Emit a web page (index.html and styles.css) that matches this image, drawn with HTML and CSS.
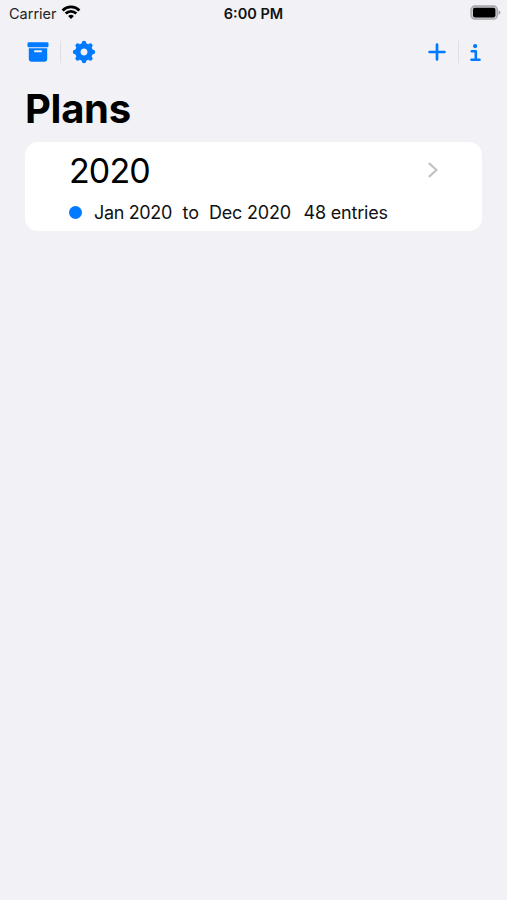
FILE: index.html
```html
<!DOCTYPE html>
<html lang="en">
<head>
<meta charset="utf-8">
<title>Plans</title>
<link rel="stylesheet" href="styles.css">
</head>
<body>
<header class="status">
  <div class="carrier"><span>Carrier</span>
    <svg width="20" height="15" viewBox="0 0 20 15" fill="none" stroke="#000" stroke-width="2.8"><path d="M1.6 5.4a12 12 0 0 1 16.8 0M4.7 8.6a7.6 7.6 0 0 1 10.6 0"/><path d="M10 14l-2.9-2.9a4.2 4.2 0 0 1 5.8 0z" fill="#000" stroke="none"/></svg>
  </div>
  <time class="clock">6:00 PM</time>
  <svg class="battery" width="31" height="16" viewBox="0 0 31 16"><rect x="1" y="1" width="26.4" height="13.2" rx="4" fill="#c9c9cc" stroke="#a5a5a9" stroke-width="1.3"/><rect x="3" y="2.8" width="22.4" height="9.6" rx="1.8"/><path d="M28.5 5.3q2 1 2 2.3t-2 2.3z" fill="#a5a5a9"/></svg>
</header>
<nav class="toolbar">
  <div class="group">
    <svg width="22" height="20" viewBox="0 0 22 20" fill="#007aff"><rect x=".5" y=".3" width="21" height="4.9" rx="1.3"/><path fill-rule="evenodd" d="M1.8 6.3h18.4v10.4q0 3-3 3H4.8q-3 0-3-3zM7.8 8.3q-.8 0-.8 1t.8 1h6.4q.8 0 .8-1t-.8-1z"/></svg>
    <i class="divider"></i>
    <svg class="gear" width="24" height="24" viewBox="-12 -12 24 24"><circle r="6.2" fill="none" stroke="#007aff" stroke-width="5.4"/><path stroke="#007aff" stroke-width="4.6" stroke-linecap="round" d="M0-7.5V-8.9M0 7.5V8.9M-7.5 0H-8.9M7.5 0H8.9M5.3-5.3l1-1M5.3 5.3l1 1M-5.3 5.3l-1 1M-5.3-5.3l-1-1"/></svg>
  </div>
  <div class="group">
    <svg class="plus" width="18" height="18" viewBox="0 0 18 18" fill="none" stroke="#007aff" stroke-width="2.7" stroke-linecap="round"><path d="M9 1.6v14.8M1.6 9h14.8"/></svg>
    <i class="divider"></i>
    <svg class="info" width="11" height="18" viewBox="0 0 11 18" fill="none" stroke="#007aff" stroke-width="2.6" stroke-linecap="round" stroke-linejoin="round"><circle cx="5.1" cy="2.1" r="2.1" fill="#007aff" stroke="none"/><path d="M1.8 7.3h4v8.4M1.5 15.7h8"/></svg>
  </div>
</nav>
<main>
  <h1>Plans</h1>
  <article class="card">
    <div class="heading"><h2>2020</h2>
      <svg class="chevron" width="10" height="16" viewBox="0 0 10 16" fill="none" stroke="#c4c4c7" stroke-width="2.3" stroke-linecap="round" stroke-linejoin="round"><path d="M1.5 1.7L8.5 8l-7 6.3"/></svg>
    </div>
    <div class="meta"><i class="dot"></i><span class="from">Jan 2020</span><span class="to">to</span><span class="until">Dec 2020</span><span>48 entries</span></div>
  </article>
</main>
</body>
</html>
```
FILE: styles.css
```css
* { box-sizing: border-box; }
body { margin: 0; min-height: 900px; background: #f1f1f6; color: #000; font-family: Inter, sans-serif; }
svg { display: block; flex: none; }
.status { height: 27px; padding: 0 6px 0 9px; display: grid; grid-template-columns: 1fr auto 1fr; align-items: center; font-size: 14.5px; }
.carrier { display: flex; align-items: center; gap: 4px; color: #222; }
.carrier span { width: 48px; }
.carrier svg { margin-top: -2px; }
.clock { font-weight: 600; color: #111; margin-right: 3px; }
.battery { justify-self: end; margin-top: -1px; }
.toolbar { height: 50px; padding: 0 26px 0 27px; display: flex; justify-content: space-between; align-items: center; }
.group { display: flex; align-items: center; }
.divider { width: 1px; height: 22px; margin: 0 11px; background: #dfdfe4; }
.gear { margin-left: -.5px; }
.plus { margin-right: 1px; }
.info { margin-top: 1px; }
h1, h2 { margin: 0; }
h1 { height: 65px; padding-left: 25px; font-size: 40px; line-height: 64px; font-weight: 700; letter-spacing: -.3px; }
.card { margin: 0 25px; height: 89px; padding: 0 44px; border-radius: 13px; background: #fff; }
.heading { height: 57px; display: flex; align-items: center; justify-content: space-between; }
h2 { font-size: 34px; font-weight: 400; letter-spacing: -.9px; }
.chevron { margin-top: -1px; }
.meta { display: flex; align-items: center; height: 26px; font-size: 18px; letter-spacing: -.2px; white-space: nowrap; color: #111; }
.dot { width: 13px; height: 13px; border-radius: 50%; background: #007aff; margin-right: 12px; }
.from { width: 88.5px; letter-spacing: -.35px; }
.to { width: 26.5px; letter-spacing: 0; }
.until { width: 94.5px; }
```
